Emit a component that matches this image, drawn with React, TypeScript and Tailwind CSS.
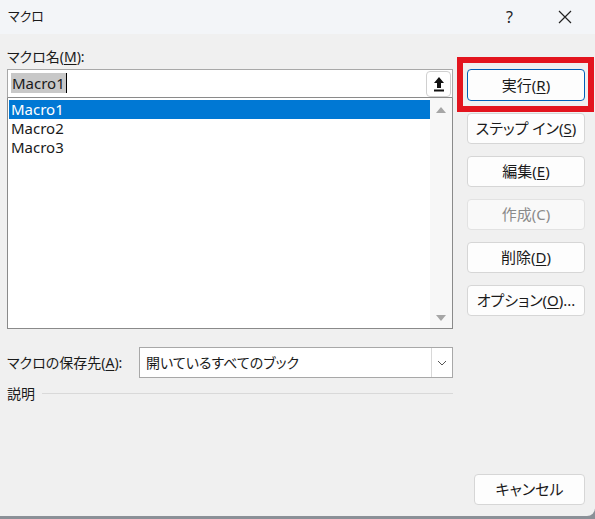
import React from "react";

const font = "font-['Noto_Sans','Noto_Sans_CJK_JP',sans-serif] [font-feature-settings:'palt']";

function Btn({ children, disabled }: { children: React.ReactNode; disabled?: boolean }) {
  return (
    <div
      className={
        "h-[31px] flex items-center justify-center rounded-[4px] text-[15px] " +
        (disabled
          ? "border border-[#e2e2e2] bg-[#f9f9f9] text-[#8a8a8a]"
          : "border border-[#d6d6d6] bg-[#fdfdfd] text-[#1a1a1a]")
      }
    >
      {children}
    </div>
  );
}

export default function App() {
  return (
    <div className={"w-[595px] h-[519px] bg-[#8b9097] overflow-hidden " + font}>
      <div className="relative w-[595px] h-[516px] bg-[#f0f0f0] rounded-br-[8px] flex flex-col">
        {/* title bar */}
        <div className="h-[34px] bg-[#f3f5f8] flex items-center pl-[8px] text-[13px] text-[#1a1a1a]">
          <span>マクロ</span>
          <span className="ml-auto mr-[45px] text-[16px] text-[#222]">?</span>
          <svg width="14" height="14" viewBox="0 0 14 14" className="mr-[23px]">
            <path d="M1 1 L13 13 M13 1 L1 13" stroke="#222" strokeWidth="1.2" fill="none" />
          </svg>
        </div>

        {/* body */}
        <div className="flex-1 flex pl-[7px] pr-[10px] pb-[11px] text-[#1a1a1a]">
          {/* left column */}
          <div className="w-[446px] flex flex-col">
            <div className="mt-[13px] h-[20px] leading-[20px] text-[14px]">
              マクロ名(<span className="underline underline-offset-2">M</span>):
            </div>
            <div className="mt-[2px] h-[29px] bg-white border border-[#a8a8a8] border-b-[#8a8a8a] flex items-center pl-[3px] pr-[1px]">
              <span className="bg-[#c8c8c8] text-[15px] leading-[20px] px-[1px] text-[#1a1a1a] -mt-[2px]">Macro1</span>
              <span className="w-px h-[20px] bg-black -mt-[2px]"></span>
              <div className="ml-auto w-[25px] h-[26px] bg-white border border-[#d0d0d0] rounded-[4px] flex items-center justify-center">
                <svg width="12" height="16" viewBox="0 0 12 16">
                  <path d="M6 1 L11 7 L8 7 L8 12 L4 12 L4 7 L1 7 Z" fill="#111" />
                  <rect x="1" y="13.5" width="10" height="2" fill="#111" />
                </svg>
              </div>
            </div>
            <div className="h-[231px] bg-white border border-[#8a8a8a] border-t-0 flex pt-[2px] pl-[1px]">
              <div className="flex-1 flex flex-col text-[15px] leading-[19px]">
                <div className="bg-[#0078d4] text-white pl-[2px] h-[19px]">Macro1</div>
                <div className="pl-[2px] h-[19px]">Macro2</div>
                <div className="pl-[2px] h-[19px]">Macro3</div>
              </div>
              <div className="w-[22px] -mt-[2px] bg-[#f7f7f7] flex flex-col items-center justify-between pt-[9px] pb-[7px]">
                <svg width="10" height="6" viewBox="0 0 10 6"><path d="M0 6 L5 0 L10 6 Z" fill="#a6a6a6" /></svg>
                <svg width="10" height="6" viewBox="0 0 10 6"><path d="M0 0 L5 6 L10 0 Z" fill="#a6a6a6" /></svg>
              </div>
            </div>

            <div className="mt-[18px] h-[31px] flex items-center">
              <span className="text-[14px]">
                マクロの保存先(<span className="underline underline-offset-2">A</span>):
              </span>
              <div className="ml-auto w-[314px] h-[31px] bg-white border border-[#a8a8a8] flex items-center">
                <span className="pl-[6px] text-[14px]">開いているすべてのブック</span>
                <div className="ml-auto w-[21px] h-full border-l border-[#d8d8d8] flex items-center justify-center">
                  <svg width="10" height="6" viewBox="0 0 10 6"><path d="M1 1 L5 5 L9 1" stroke="#555" strokeWidth="1" fill="none" /></svg>
                </div>
              </div>
            </div>

            <div className="mt-[6px] h-[18px] flex items-center text-[14px]">
              <span>説明</span>
              <div className="flex-1 ml-[7px] h-px bg-[#d9d9d9]"></div>
            </div>
          </div>

          {/* right column */}
          <div className="ml-[14px] w-[118px] flex flex-col pt-[35px]">
            <div className="h-[32px] flex items-center justify-center rounded-[4px] border border-[#005fb8] bg-[#fdfdfd] text-[15px]">
              実行(<span className="underline underline-offset-2">R</span>)
            </div>
            <div className="mt-[12px] flex flex-col gap-[12px]">
              <Btn>ステップ イン(<span className="underline underline-offset-2">S</span>)</Btn>
              <Btn>編集(<span className="underline underline-offset-2">E</span>)</Btn>
              <Btn disabled>作成(C)</Btn>
              <Btn>削除(<span className="underline underline-offset-2">D</span>)</Btn>
              <Btn>オプション(<span className="underline underline-offset-2">O</span>)...</Btn>
            </div>
            <div className="mt-auto ml-[7px]">
              <Btn>キャンセル</Btn>
            </div>
          </div>
        </div>

        {/* red highlight annotation */}
        <div className="absolute left-[457px] top-[57px] w-[137px] h-[55px] border-[6px] border-[#e3141e] pointer-events-none"></div>
      </div>
    </div>
  );
}
